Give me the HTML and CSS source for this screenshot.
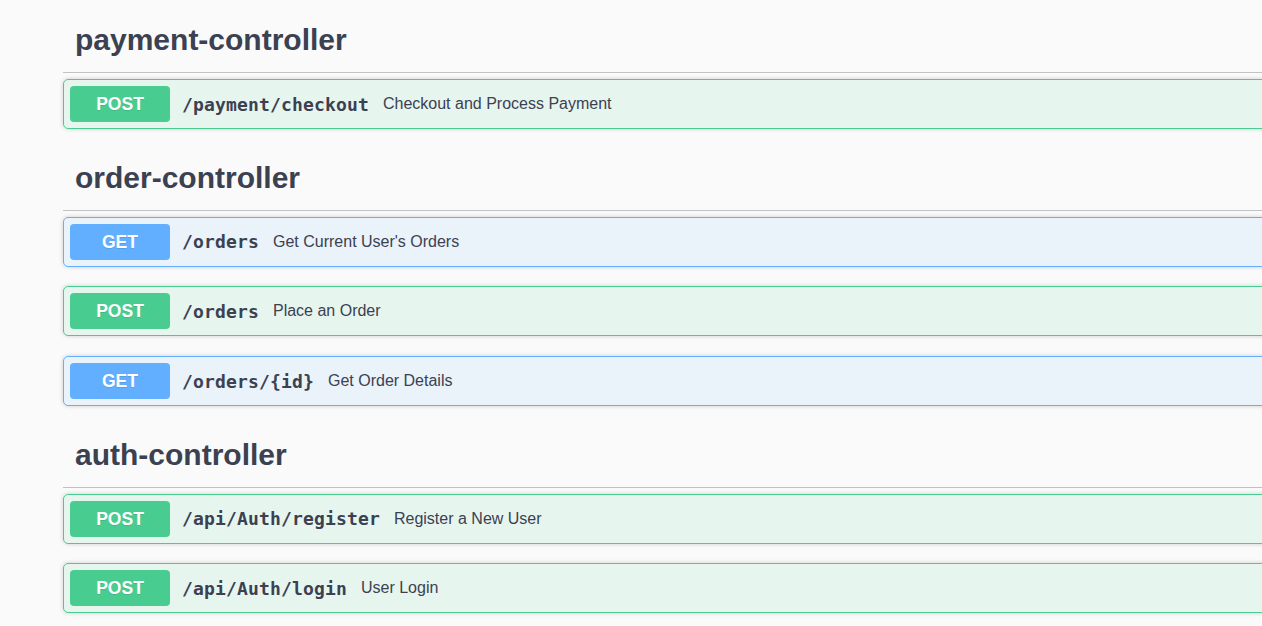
FILE: index.html
```html
<!DOCTYPE html>
<html lang="en">
<head>
<meta charset="utf-8">
<title>Swagger UI</title>
<link rel="stylesheet" href="styles.css">
</head>
<body>
<div class="wrapper">
  <section class="tag-section">
    <h3 class="tag">payment-controller</h3>
    <div class="opblock post">
      <span class="method">POST</span>
      <span class="path">/payment/checkout</span>
      <span class="desc">Checkout and Process Payment</span>
    </div>
  </section>
  <section class="tag-section">
    <h3 class="tag">order-controller</h3>
    <div class="opblock get">
      <span class="method">GET</span>
      <span class="path">/orders</span>
      <span class="desc">Get Current User's Orders</span>
    </div>
    <div class="opblock post">
      <span class="method">POST</span>
      <span class="path">/orders</span>
      <span class="desc">Place an Order</span>
    </div>
    <div class="opblock get">
      <span class="method">GET</span>
      <span class="path">/orders/{id}</span>
      <span class="desc">Get Order Details</span>
    </div>
  </section>
  <section class="tag-section">
    <h3 class="tag">auth-controller</h3>
    <div class="opblock post">
      <span class="method">POST</span>
      <span class="path">/api/Auth/register</span>
      <span class="desc">Register a New User</span>
    </div>
    <div class="opblock post">
      <span class="method">POST</span>
      <span class="path">/api/Auth/login</span>
      <span class="desc">User Login</span>
    </div>
  </section>
</div>
</body>
</html>
```

FILE: styles.css
```css
html, body {
  margin: 0;
  padding: 0;
  background: #fafafa;
  overflow: hidden;
}
body {
  font-family: "Liberation Sans", Arial, sans-serif;
  color: #3b4151;
}
.wrapper {
  padding: 11px 0 0 63px;
  width: 1300px;
}
.tag-section {
  display: block;
}
.tag {
  margin: 0 0 6px 0;
  padding: 9px 20px 12px 12px;
  line-height: 40px;
  font-size: 30px;
  font-weight: bold;
  color: #3b4151;
  border-bottom: 1px solid rgba(59, 65, 81, 0.3);
}
.opblock {
  display: flex;
  align-items: center;
  box-sizing: border-box;
  height: 50px;
  margin: 0 0 19.7px 0;
  padding: 0 6px;
  border: 1px solid;
  border-radius: 5px;
  box-shadow: 0 0 4px rgba(0, 0, 0, 0.19);
}
.opblock.post {
  border-color: #49cc90;
  background: rgba(73, 204, 144, 0.1);
}
.opblock.get {
  border-color: #61affe;
  background: rgba(97, 175, 254, 0.1);
}
.method {
  flex: none;
  width: 100px;
  height: 36px;
  line-height: 36px;
  text-align: center;
  border-radius: 4px;
  color: #fff;
  font-size: 17.5px;
  font-weight: bold;
  text-shadow: 0 1px 0 rgba(0, 0, 0, 0.1);
}
.post .method { background: #49cc90; }
.get .method { background: #61affe; }
.path {
  padding: 0 14px 0 12px;
  font-family: "DejaVu Sans Mono", "Liberation Mono", monospace;
  font-weight: bold;
  font-size: 18px;
  letter-spacing: 0.16px;
  color: #3b4151;
}
.desc {
  font-size: 16px;
  color: #3b4151;
}
```
